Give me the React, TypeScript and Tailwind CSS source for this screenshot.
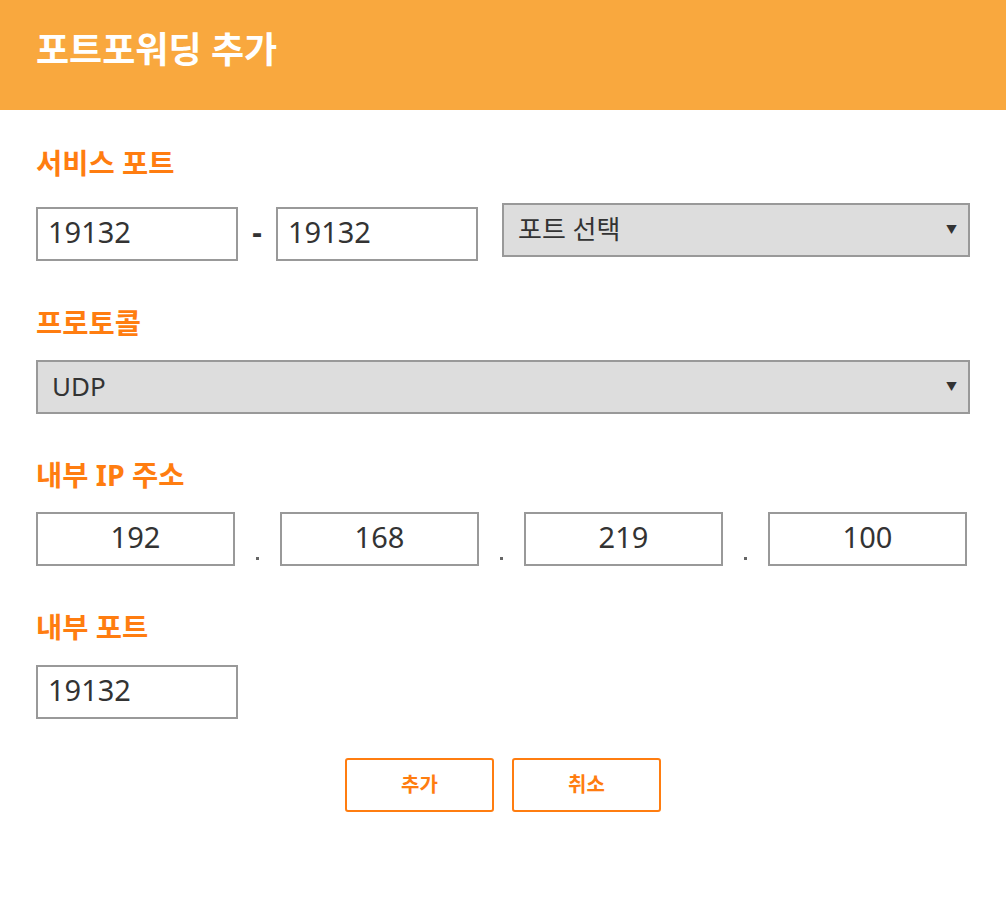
const font = "font-['Noto_Sans','Noto_Sans_CJK_KR',sans-serif]";

function Label({ children }: { children: React.ReactNode }) {
  return (
    <div className="text-[28.5px] font-bold leading-[36px] text-[#ff7d10]">{children}</div>
  );
}

function Box({ value, center, className = "" }: { value: string; center?: boolean; className?: string }) {
  return (
    <div
      className={`h-[54px] border-2 border-[#999999] bg-white flex items-center pb-[4px] text-[29px] text-[#333333] ${
        center ? "justify-center" : "pl-[10px]"
      } ${className}`}
    >
      {value}
    </div>
  );
}

function Select({ value, className = "" }: { value: string; className?: string }) {
  return (
    <div
      className={`h-[54px] border-2 border-[#999999] bg-[#dddddd] flex items-center justify-between pl-[14px] pr-[11px] pb-[2px] text-[26px] text-[#333333] ${className}`}
    >
      <span>{value}</span>
      <span className="text-[11px] leading-none">▼</span>
    </div>
  );
}

function Dot() {
  return (
    <div className="w-[45px] h-[54px] flex items-end justify-center pb-[6px]">
      <div className="w-[3px] h-[3px] bg-[#666666]" />
    </div>
  );
}

export default function App() {
  return (
    <div className={`${font} min-h-screen bg-white`}>
      {/* Header */}
      <div className="h-[110px] bg-[#f9a83e] flex items-center pl-[36px] pb-[10px]">
        <h1 className="text-[36px] font-bold text-white leading-none">포트포워딩 추가</h1>
      </div>

      <div className="px-[36px] pt-[35px]">
        {/* Service port */}
        <Label>서비스 포트</Label>
        <div className="flex items-start mt-[22px]">
          <Box value="19132" className="w-[202px] mt-[4px]" />
          <div className="w-[38px] h-[54px] mt-[1px] flex items-center justify-center text-[30px] font-bold text-[#333333]">
            -
          </div>
          <Box value="19132" className="w-[202px] mt-[4px]" />
          <Select value="포트 선택" className="flex-1 ml-[24px]" />
        </div>

        {/* Protocol */}
        <div className="mt-[44px]">
          <Label>프로토콜</Label>
          <Select value="UDP" className="mt-[19px]" />
        </div>

        {/* Internal IP */}
        <div className="mt-[43px]">
          <Label>내부 IP 주소</Label>
          <div className="flex mt-[19px]">
            <Box value="192" center className="w-[199px]" />
            <Dot />
            <Box value="168" center className="w-[199px]" />
            <Dot />
            <Box value="219" center className="w-[199px]" />
            <Dot />
            <Box value="100" center className="w-[199px]" />
          </div>
        </div>

        {/* Internal port */}
        <div className="mt-[43px]">
          <Label>내부 포트</Label>
          <Box value="19132" className="w-[202px] mt-[20px]" />
        </div>

        {/* Buttons */}
        <div className="flex justify-center gap-[18px] mt-[39px]">
          <button className="w-[149px] h-[54px] border-2 border-[#ff7d10] rounded-[3px] text-[20px] font-bold text-[#ff7d10] bg-white">
            추가
          </button>
          <button className="w-[149px] h-[54px] border-2 border-[#ff7d10] rounded-[3px] text-[20px] font-bold text-[#ff7d10] bg-white">
            취소
          </button>
        </div>
      </div>
    </div>
  );
}
